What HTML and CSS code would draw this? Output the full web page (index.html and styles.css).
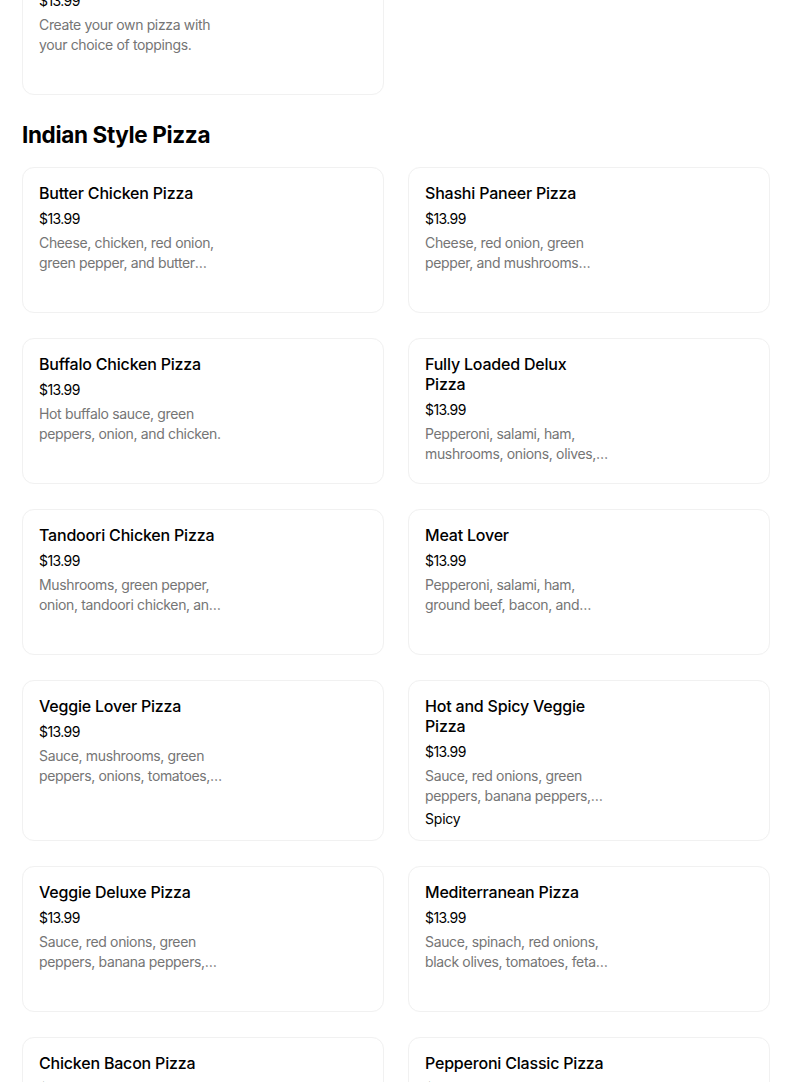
FILE: index.html
```html
<!DOCTYPE html>
<html lang="en">
<head>
<meta charset="utf-8">
<title>Menu</title>
<link rel="stylesheet" href="styles.css">
</head>
<body>
<main class="menu">
  <section class="section first">
    <div class="grid">
      <article class="card">
        <h3 class="title">Build Your Own Pizza</h3>
        <div class="price">$13.99</div>
        <p class="desc">Create your own pizza with your choice of toppings.</p>
      </article>
    </div>
  </section>

  <section class="section">
    <h2 class="heading">Indian Style Pizza</h2>
    <div class="grid">
      <article class="card">
        <h3 class="title">Butter Chicken Pizza</h3>
        <div class="price">$13.99</div>
        <p class="desc">Cheese, chicken, red onion, green pepper, and butter chicken sauce.</p>
      </article>
      <article class="card">
        <h3 class="title">Shashi Paneer Pizza</h3>
        <div class="price">$13.99</div>
        <p class="desc">Cheese, red onion, green pepper, and mushrooms WITH PANEER.</p>
      </article>
      <article class="card">
        <h3 class="title">Buffalo Chicken Pizza</h3>
        <div class="price">$13.99</div>
        <p class="desc">Hot buffalo sauce, green peppers, onion, and chicken.</p>
      </article>
      <article class="card">
        <h3 class="title">Fully Loaded Delux Pizza</h3>
        <div class="price">$13.99</div>
        <p class="desc">Pepperoni, salami, ham, mushrooms, onions, olives, green peppers.</p>
      </article>
      <article class="card">
        <h3 class="title">Tandoori Chicken Pizza</h3>
        <div class="price">$13.99</div>
        <p class="desc">Mushrooms, green pepper, onion, tandoori chicken, and sauce.</p>
      </article>
      <article class="card">
        <h3 class="title">Meat Lover</h3>
        <div class="price">$13.99</div>
        <p class="desc">Pepperoni, salami, ham, ground beef, bacon, and sausage.</p>
      </article>
      <article class="card">
        <h3 class="title">Veggie Lover Pizza</h3>
        <div class="price">$13.99</div>
        <p class="desc">Sauce, mushrooms, green peppers, onions, tomatoes, olives.</p>
      </article>
      <article class="card">
        <h3 class="title">Hot and Spicy Veggie Pizza</h3>
        <div class="price">$13.99</div>
        <p class="desc">Sauce, red onions, green peppers, banana peppers, jalapenos.</p>
        <div class="tag">Spicy</div>
      </article>
      <article class="card">
        <h3 class="title">Veggie Deluxe Pizza</h3>
        <div class="price">$13.99</div>
        <p class="desc">Sauce, red onions, green peppers, banana peppers, mushrooms.</p>
      </article>
      <article class="card">
        <h3 class="title">Mediterranean Pizza</h3>
        <div class="price">$13.99</div>
        <p class="desc">Sauce, spinach, red onions, black olives, tomatoes, feta cheese.</p>
      </article>
      <article class="card">
        <h3 class="title">Chicken Bacon Pizza</h3>
        <div class="price">$13.99</div>
        <p class="desc">Sauce, chicken, bacon, onions, and green peppers.</p>
      </article>
      <article class="card">
        <h3 class="title">Pepperoni Classic Pizza</h3>
        <div class="price">$13.99</div>
        <p class="desc">Sauce, cheese, and double pepperoni.</p>
      </article>
    </div>
  </section>
</main>
</body>
</html>
```
FILE: styles.css
```css
html, body {
  margin: 0;
  padding: 0;
  background: #ffffff;
}

body {
  font-family: Inter, "Liberation Sans", Arial, sans-serif;
  color: #000000;
  overflow: hidden;
}

.menu {
  width: 748px;
  padding-left: 22px;
}

.section.first {
  margin-top: -51px;
}

.heading {
  margin: 24px 0 16px;
  font-size: 22.5px;
  line-height: 32px;
  font-weight: 700;
  letter-spacing: -0.35px;
}

.grid {
  display: grid;
  grid-template-columns: 1fr 1fr;
  column-gap: 24px;
  row-gap: 25px;
}

.card {
  box-sizing: border-box;
  min-height: 146px;
  padding: 15px 16px 11px;
  border: 1px solid #f1f1f1;
  border-radius: 12px;
  box-shadow: 0 0 1px rgba(0, 0, 0, 0.03);
  display: flex;
  flex-direction: column;
}

.title {
  margin: 0;
  width: 185px;
  font-size: 16px;
  line-height: 20px;
  font-weight: 500;
  letter-spacing: -0.2px;
}

.price {
  margin-top: 6px;
  font-size: 14px;
  line-height: 20px;
  letter-spacing: -0.6px;
}

.desc {
  margin: 4px 0 0;
  width: 185px;
  font-size: 14px;
  line-height: 20px;
  color: #757575;
  letter-spacing: -0.35px;
  display: -webkit-box;
  -webkit-line-clamp: 2;
  -webkit-box-orient: vertical;
  overflow: hidden;
}

.tag {
  margin-top: 3px;
  font-size: 14px;
  line-height: 20px;
  letter-spacing: -0.2px;
}
```
